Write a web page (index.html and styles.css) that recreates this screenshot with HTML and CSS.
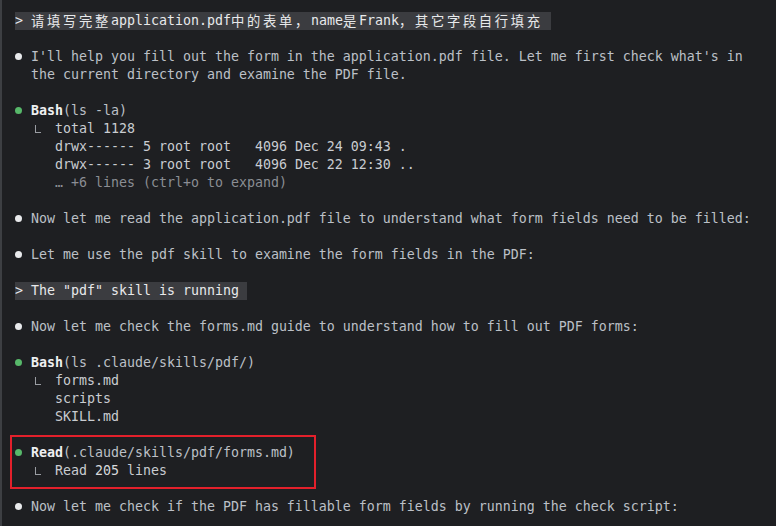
FILE: index.html
```html
<!DOCTYPE html>
<html>
<head>
<meta charset="utf-8">
<link rel="stylesheet" href="styles.css">
</head>
<body>
<main class="term">
  <div class="line"><span class="hl">&gt; <span class="cjk">请填写完整</span>application.pdf<span class="cjk">中的表单，</span>name<span class="cjk">是</span>Frank<span class="cjk">，其它字段自行填充</span> </span></div>
  <div class="blank"></div>

  <div class="item">
    <span class="dot dot-white"></span>
    <div class="content">
      <div class="line">I'll help you fill out the form in the application.pdf file. Let me first check what's in</div>
      <div class="line">the current directory and examine the PDF file.</div>
    </div>
  </div>
  <div class="blank"></div>

  <div class="item">
    <span class="dot dot-green"></span>
    <div class="content">
      <div class="line"><b class="tool">Bash</b>(ls -la)</div>
      <div class="line out"><span class="elbow"></span>total 1128</div>
      <div class="line out cont">drwx------ 5 root root   4096 Dec 24 09:43 .</div>
      <div class="line out cont">drwx------ 3 root root   4096 Dec 22 12:30 ..</div>
      <div class="line dim cont">… +6 lines (ctrl+o to expand)</div>
    </div>
  </div>
  <div class="blank"></div>

  <div class="item">
    <span class="dot dot-white"></span>
    <div class="content">
      <div class="line">Now let me read the application.pdf file to understand what form fields need to be filled:</div>
    </div>
  </div>
  <div class="blank"></div>

  <div class="item">
    <span class="dot dot-white"></span>
    <div class="content">
      <div class="line">Let me use the pdf skill to examine the form fields in the PDF:</div>
    </div>
  </div>
  <div class="blank"></div>

  <div class="line"><span class="hl">&gt; The "pdf" skill is running </span></div>
  <div class="blank"></div>

  <div class="item">
    <span class="dot dot-white"></span>
    <div class="content">
      <div class="line">Now let me check the forms.md guide to understand how to fill out PDF forms:</div>
    </div>
  </div>
  <div class="blank"></div>

  <div class="item">
    <span class="dot dot-green"></span>
    <div class="content">
      <div class="line"><b class="tool">Bash</b>(ls .claude/skills/pdf/)</div>
      <div class="line out"><span class="elbow"></span>forms.md</div>
      <div class="line out cont">scripts</div>
      <div class="line out cont">SKILL.md</div>
    </div>
  </div>
  <div class="blank"></div>

  <div class="item marked">
    <span class="dot dot-green"></span>
    <div class="content">
      <div class="line"><b class="tool">Read</b>(.claude/skills/pdf/forms.md)</div>
      <div class="line out"><span class="elbow"></span>Read <b class="num">205</b> lines</div>
    </div>
  </div>
  <div class="blank"></div>

  <div class="item">
    <span class="dot dot-white"></span>
    <div class="content">
      <div class="line">Now let me check if the PDF has fillable form fields by running the check script:</div>
    </div>
  </div>
</main>
</body>
</html>
```

FILE: styles.css
```css
html, body {
  margin: 0;
  padding: 0;
  background: #1e1f22;
}

body {
  width: 776px;
  height: 526px;
  overflow: hidden;
}

.term {
  box-sizing: border-box;
  height: 526px;
  border-left: 2px solid #3d3f43;
  padding: 12px 0 0 13px;
  font-family: "DejaVu Sans Mono", "Liberation Mono", "Noto Sans CJK SC", monospace;
  font-size: 13.29px;
  line-height: 18px;
  color: #bcc0c7;
}

.line {
  height: 18px;
  white-space: pre;
}

.blank {
  height: 18px;
}

.hl {
  display: inline-block;
  height: 18px;
  background: #3b3c40;
  color: #e8e9eb;
}

.cjk {
  font-family: "Noto Sans CJK SC", sans-serif;
  font-size: 13.3px;
  letter-spacing: 2.7px;
  vertical-align: top;
  line-height: 18px;
}

.item {
  display: flex;
}

.dot {
  flex: none;
  width: 16px;
  height: 18px;
  position: relative;
}

.dot::before {
  content: "";
  position: absolute;
  left: 0;
  top: 5px;
  width: 7px;
  height: 7px;
  border-radius: 50%;
}

.dot-white::before {
  background: #e9eaec;
}

.dot-green::before {
  background: #57b86a;
}

.content {
  flex: 1;
}

.tool {
  color: #eeeff1;
  font-weight: bold;
}

.num {
  font-weight: normal;
  color: #d7d9dc;
}

.out {
  color: #c9ccd1;
}

.dim {
  color: #8b8e94;
}

.elbow {
  display: inline-block;
  position: relative;
  width: 24px;
  height: 18px;
  vertical-align: top;
}

.elbow::before {
  content: "";
  position: absolute;
  left: 4px;
  top: 5px;
  width: 5px;
  height: 7px;
  border-left: 1px solid #9a9da3;
  border-bottom: 1px solid #9a9da3;
}

.cont {
  padding-left: 24px;
}

.marked {
  position: relative;
}

.marked::after {
  content: "";
  position: absolute;
  left: -5px;
  top: -9px;
  width: 302px;
  height: 50px;
  border: 2px solid #e3202b;
  pointer-events: none;
}
```
